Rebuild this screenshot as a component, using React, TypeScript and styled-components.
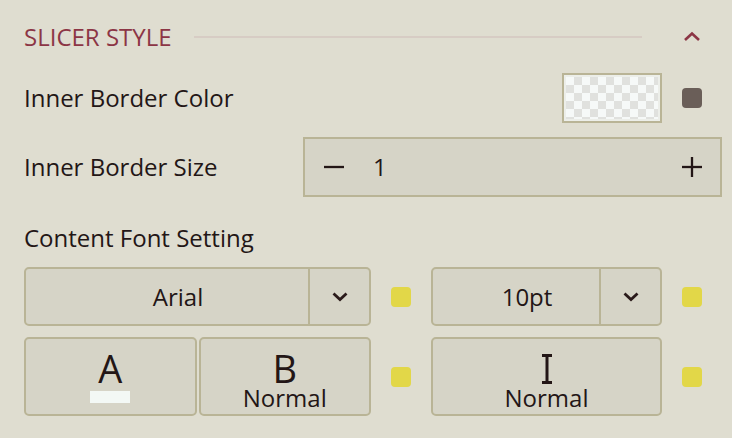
import React from "react";
import styled, { createGlobalStyle } from "styled-components";

const Global = createGlobalStyle`
  html, body { margin: 0; padding: 0; background: #dfddd0; }
  body { font-family: "Open Sans", "Noto Sans", sans-serif; color: #231616; }
  * { box-sizing: border-box; }
`;

const Panel = styled.div`
  width: 732px;
  height: 438px;
  padding: 21px 10px 0 24px;
  background: #dfddd0;
  overflow: hidden;
`;

const Header = styled.div`
  display: flex;
  align-items: center;
  height: 32px;
`;

const Title = styled.div`
  font-size: 24px;
  line-height: 32px;
  color: #8c3545;
  letter-spacing: 0;
`;

const Rule = styled.div`
  flex: 1;
  height: 2px;
  background: #d7ccc4;
  margin: 0 40px 0 22px;
`;

const IconBox = styled.div`
  width: 20px;
  height: 20px;
  display: flex;
  align-items: center;
  justify-content: center;
  margin-right: 20px;
`;

const Row = styled.div<{ $mt: number; $h: number }>`
  display: flex;
  align-items: center;
  margin-top: ${(p) => p.$mt}px;
  height: ${(p) => p.$h}px;
`;

const Label = styled.div`
  flex: 1;
  font-size: 24px;
  line-height: 32px;
  white-space: nowrap;
`;

const SectionLabel = styled.div<{ $mt: number }>`
  font-size: 24px;
  line-height: 32px;
  margin-top: ${(p) => p.$mt}px;
`;

const Swatch = styled.div`
  width: 100px;
  height: 50px;
  border: 2px solid #b9b496;
  padding: 2px;
  background: #eceee9;
`;

const Checker = styled.div`
  width: 100%;
  height: 100%;
  background-color: #f6f9f8;
  background-image: conic-gradient(
    #e0e1de 25%,
    #f6f9f8 0 50%,
    #e0e1de 0 75%,
    #f6f9f8 0
  );
  background-size: 16px 16px;
`;

const Dot = styled.div<{ $color: string; $mr?: number }>`
  width: 20px;
  height: 20px;
  border-radius: 4px;
  background: ${(p) => p.$color};
  margin-left: ${(p) => (p.$mr !== undefined ? 20 : 0)}px;
  margin-right: ${(p) => p.$mr ?? 0}px;
`;

const Stepper = styled.div`
  width: 419px;
  height: 60px;
  border: 2px solid #b9b496;
  background: #d6d4c7;
  display: flex;
  align-items: center;
`;

const StepButton = styled.div<{ $w: number }>`
  width: ${(p) => p.$w}px;
  height: 100%;
  display: flex;
  align-items: center;
  justify-content: center;
`;

const StepValue = styled.div`
  flex: 1;
  font-size: 24px;
  line-height: 32px;
  padding-left: 10px;
`;

const Grid = styled.div`
  display: grid;
  grid-template-columns: 347px 20px 231px 20px;
  grid-template-rows: 59px 79px;
  column-gap: 20px;
  row-gap: 11px;
  align-items: center;
  margin-top: 13px;
`;

const Select = styled.div`
  height: 59px;
  border: 2px solid #b9b496;
  border-radius: 5px;
  background: #d6d4c7;
  display: flex;
  align-items: stretch;
`;

const SelectValue = styled.div`
  flex: 1;
  display: flex;
  align-items: center;
  justify-content: center;
  padding-left: 22px;
  font-size: 24px;
  line-height: 32px;
`;

const SelectToggle = styled.div`
  width: 61px;
  border-left: 2px solid #b9b496;
  display: flex;
  align-items: center;
  justify-content: center;
`;

const ButtonPair = styled.div`
  display: flex;
  gap: 2px;
  height: 79px;
`;

const StyleButton = styled.div`
  flex: 1;
  height: 79px;
  border: 2px solid #b9b496;
  border-radius: 5px;
  background: #d6d4c7;
  display: flex;
  flex-direction: column;
  align-items: center;
  padding-top: 12px;
`;

const BigGlyph = styled.div`
  font-size: 38px;
  line-height: 35px;
  height: 35px;
`;

const IconLine = styled.div`
  height: 35px;
  display: flex;
  align-items: center;
  justify-content: center;
`;

const SubText = styled.div`
  font-size: 24px;
  line-height: 24px;
`;

const ColorBar = styled.div`
  width: 40px;
  height: 12px;
  margin-top: 5px;
  background: #f3f8f5;
`;

const ChevronUp = () => (
  <svg width="20" height="20" viewBox="0 0 20 20">
    <polyline
      points="3,13 10,6.5 17,13"
      fill="none"
      stroke="#8c3545"
      strokeWidth="2.6"
    />
  </svg>
);

const ChevronDown = () => (
  <svg width="20" height="20" viewBox="0 0 20 20">
    <polyline
      points="3.5,6.5 10,12.5 16.5,6.5"
      fill="none"
      stroke="#2a1a1a"
      strokeWidth="2.8"
    />
  </svg>
);

const MinusIcon = () => (
  <svg width="20" height="20" viewBox="0 0 20 20">
    <line x1="0" y1="10" x2="20" y2="10" stroke="#231616" strokeWidth="2.3" />
  </svg>
);

const PlusIcon = () => (
  <svg width="20" height="20" viewBox="0 0 20 20">
    <line x1="0" y1="10" x2="20" y2="10" stroke="#231616" strokeWidth="2.3" />
    <line x1="10" y1="0" x2="10" y2="20" stroke="#231616" strokeWidth="2.3" />
  </svg>
);

const CursorIcon = () => (
  <svg width="12" height="30" viewBox="0 0 12 30">
    <line x1="1" y1="1.5" x2="11" y2="1.5" stroke="#231616" strokeWidth="3" />
    <line x1="1" y1="28.5" x2="11" y2="28.5" stroke="#231616" strokeWidth="3" />
    <line x1="6" y1="1.5" x2="6" y2="28.5" stroke="#231616" strokeWidth="3" />
  </svg>
);

const YELLOW = "#e2d748";

export default function App() {
  return (
    <>
      <Global />
      <Panel>
        <Header>
          <Title>SLICER STYLE</Title>
          <Rule />
          <IconBox>
            <ChevronUp />
          </IconBox>
        </Header>

        <Row $mt={20} $h={50}>
          <Label>Inner Border Color</Label>
          <Swatch>
            <Checker />
          </Swatch>
          <Dot $color="#6a5e58" $mr={20} />
        </Row>

        <Row $mt={14} $h={60}>
          <Label>Inner Border Size</Label>
          <Stepper>
            <StepButton $w={58}>
              <MinusIcon />
            </StepButton>
            <StepValue>1</StepValue>
            <StepButton $w={56}>
              <PlusIcon />
            </StepButton>
          </Stepper>
        </Row>

        <SectionLabel $mt={25}>Content Font Setting</SectionLabel>

        <Grid>
          <Select>
            <SelectValue>Arial</SelectValue>
            <SelectToggle>
              <ChevronDown />
            </SelectToggle>
          </Select>
          <Dot $color={YELLOW} />
          <Select>
            <SelectValue>10pt</SelectValue>
            <SelectToggle>
              <ChevronDown />
            </SelectToggle>
          </Select>
          <Dot $color={YELLOW} />

          <ButtonPair>
            <StyleButton>
              <BigGlyph>A</BigGlyph>
              <ColorBar />
            </StyleButton>
            <StyleButton>
              <BigGlyph>B</BigGlyph>
              <SubText>Normal</SubText>
            </StyleButton>
          </ButtonPair>
          <Dot $color={YELLOW} />
          <StyleButton>
            <IconLine>
              <CursorIcon />
            </IconLine>
            <SubText>Normal</SubText>
          </StyleButton>
          <Dot $color={YELLOW} />
        </Grid>
      </Panel>
    </>
  );
}
